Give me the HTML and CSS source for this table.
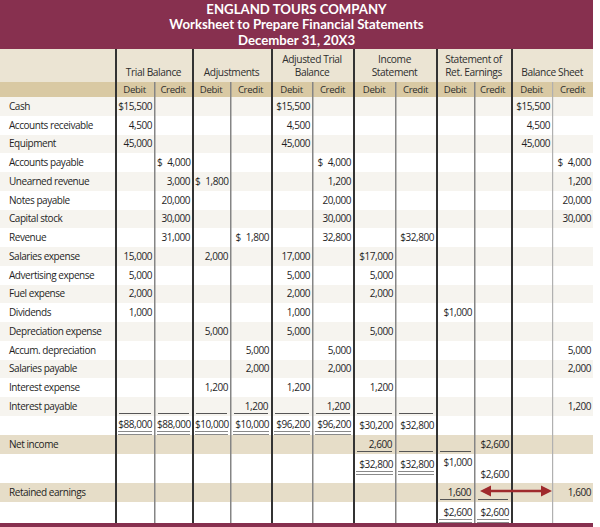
FILE: index.html
```html
<!DOCTYPE html>
<html>
<head>
<meta charset="utf-8">
<link rel="stylesheet" href="styles.css">
</head>
<body>
<div class="sheet">
  <div class="title">
    <div>ENGLAND TOURS COMPANY</div>
    <div>Worksheet to Prepare Financial Statements</div>
    <div>December 31, 20X3</div>
  </div>
  <table>
    <colgroup>
      <col class="c-label"><col class="c39"><col class="c38"><col class="c38"><col class="c41"><col class="c41"><col class="c41"><col class="c42"><col class="c41"><col class="c38"><col class="c37"><col class="c41"><col class="c41">
    </colgroup>
    <thead>
      <tr class="h1">
        <th class="lh"></th>
        <th class="g" colspan="2">Trial Balance</th>
        <th class="g" colspan="2">Adjustments</th>
        <th class="g" colspan="2">Adjusted Trial<br>Balance</th>
        <th class="g" colspan="2">Income<br>Statement</th>
        <th class="g" colspan="2">Statement of<br>Ret. Earnings</th>
        <th class="g" colspan="2">Balance Sheet</th>
      </tr>
      <tr class="h2">
        <th class="lh"></th>
        <th class="g">Debit</th><th class="i">Credit</th>
        <th class="g">Debit</th><th class="i">Credit</th>
        <th class="g">Debit</th><th class="i">Credit</th>
        <th class="g">Debit</th><th class="i">Credit</th>
        <th class="g">Debit</th><th class="i">Credit</th>
        <th class="g">Debit</th><th class="i lt">Credit</th>
      </tr>
    </thead>
    <tbody>
      <tr class="alt">
        <td class="l">Cash</td>
        <td class="g">$15,500</td><td class="i"></td><td class="g"></td><td class="i"></td><td class="g">$15,500</td><td class="i"></td><td class="g"></td><td class="i"></td><td class="g"></td><td class="i"></td><td class="g">$15,500</td><td class="i lt"></td>
      </tr>
      <tr>
        <td class="l">Accounts receivable</td>
        <td class="g">4,500</td><td class="i"></td><td class="g"></td><td class="i"></td><td class="g">4,500</td><td class="i"></td><td class="g"></td><td class="i"></td><td class="g"></td><td class="i"></td><td class="g">4,500</td><td class="i lt"></td>
      </tr>
      <tr class="alt">
        <td class="l">Equipment</td>
        <td class="g">45,000</td><td class="i"></td><td class="g"></td><td class="i"></td><td class="g">45,000</td><td class="i"></td><td class="g"></td><td class="i"></td><td class="g"></td><td class="i"></td><td class="g">45,000</td><td class="i lt"></td>
      </tr>
      <tr>
        <td class="l">Accounts payable</td>
        <td class="g"></td><td class="i"><span class="cur">$</span>4,000</td><td class="g"></td><td class="i"></td><td class="g"></td><td class="i"><span class="cur">$</span>4,000</td><td class="g"></td><td class="i"></td><td class="g"></td><td class="i"></td><td class="g"></td><td class="i lt"><span class="cur">$</span>4,000</td>
      </tr>
      <tr class="alt">
        <td class="l">Unearned revenue</td>
        <td class="g"></td><td class="i">3,000</td><td class="g"><span class="cur">$</span>1,800</td><td class="i"></td><td class="g"></td><td class="i">1,200</td><td class="g"></td><td class="i"></td><td class="g"></td><td class="i"></td><td class="g"></td><td class="i lt">1,200</td>
      </tr>
      <tr>
        <td class="l">Notes payable</td>
        <td class="g"></td><td class="i">20,000</td><td class="g"></td><td class="i"></td><td class="g"></td><td class="i">20,000</td><td class="g"></td><td class="i"></td><td class="g"></td><td class="i"></td><td class="g"></td><td class="i lt">20,000</td>
      </tr>
      <tr class="alt">
        <td class="l">Capital stock</td>
        <td class="g"></td><td class="i">30,000</td><td class="g"></td><td class="i"></td><td class="g"></td><td class="i">30,000</td><td class="g"></td><td class="i"></td><td class="g"></td><td class="i"></td><td class="g"></td><td class="i lt">30,000</td>
      </tr>
      <tr>
        <td class="l">Revenue</td>
        <td class="g"></td><td class="i">31,000</td><td class="g"></td><td class="i"><span class="cur">$</span>1,800</td><td class="g"></td><td class="i">32,800</td><td class="g"></td><td class="i">$32,800</td><td class="g"></td><td class="i"></td><td class="g"></td><td class="i lt"></td>
      </tr>
      <tr class="alt">
        <td class="l">Salaries expense</td>
        <td class="g">15,000</td><td class="i"></td><td class="g">2,000</td><td class="i"></td><td class="g">17,000</td><td class="i"></td><td class="g">$17,000</td><td class="i"></td><td class="g"></td><td class="i"></td><td class="g"></td><td class="i lt"></td>
      </tr>
      <tr>
        <td class="l">Advertising expense</td>
        <td class="g">5,000</td><td class="i"></td><td class="g"></td><td class="i"></td><td class="g">5,000</td><td class="i"></td><td class="g">5,000</td><td class="i"></td><td class="g"></td><td class="i"></td><td class="g"></td><td class="i lt"></td>
      </tr>
      <tr class="alt">
        <td class="l">Fuel expense</td>
        <td class="g">2,000</td><td class="i"></td><td class="g"></td><td class="i"></td><td class="g">2,000</td><td class="i"></td><td class="g">2,000</td><td class="i"></td><td class="g"></td><td class="i"></td><td class="g"></td><td class="i lt"></td>
      </tr>
      <tr>
        <td class="l">Dividends</td>
        <td class="g">1,000</td><td class="i"></td><td class="g"></td><td class="i"></td><td class="g">1,000</td><td class="i"></td><td class="g"></td><td class="i"></td><td class="g">$1,000</td><td class="i"></td><td class="g"></td><td class="i lt"></td>
      </tr>
      <tr class="alt">
        <td class="l">Depreciation expense</td>
        <td class="g"></td><td class="i"></td><td class="g">5,000</td><td class="i"></td><td class="g">5,000</td><td class="i"></td><td class="g">5,000</td><td class="i"></td><td class="g"></td><td class="i"></td><td class="g"></td><td class="i lt"></td>
      </tr>
      <tr>
        <td class="l">Accum. depreciation</td>
        <td class="g"></td><td class="i"></td><td class="g"></td><td class="i">5,000</td><td class="g"></td><td class="i">5,000</td><td class="g"></td><td class="i"></td><td class="g"></td><td class="i"></td><td class="g"></td><td class="i lt">5,000</td>
      </tr>
      <tr class="alt">
        <td class="l">Salaries payable</td>
        <td class="g"></td><td class="i"></td><td class="g"></td><td class="i">2,000</td><td class="g"></td><td class="i">2,000</td><td class="g"></td><td class="i"></td><td class="g"></td><td class="i"></td><td class="g"></td><td class="i lt">2,000</td>
      </tr>
      <tr>
        <td class="l">Interest expense</td>
        <td class="g"></td><td class="i"></td><td class="g">1,200</td><td class="i"></td><td class="g">1,200</td><td class="i"></td><td class="g">1,200</td><td class="i"></td><td class="g"></td><td class="i"></td><td class="g"></td><td class="i lt"></td>
      </tr>
      <tr class="alt">
        <td class="l">Interest payable</td>
        <td class="g"><div class="su">&nbsp;</div></td><td class="i"><div class="su">&nbsp;</div></td><td class="g"><div class="su">&nbsp;</div></td><td class="i"><div class="su">1,200</div></td><td class="g"><div class="su">&nbsp;</div></td><td class="i"><div class="su">1,200</div></td><td class="g"><div class="su">&nbsp;</div></td><td class="i"><div class="su">&nbsp;</div></td><td class="g"></td><td class="i"></td><td class="g"></td><td class="i lt">1,200</td>
      </tr>
      <tr class="tot">
        <td class="l"></td>
        <td class="g"><div class="du">$88,000</div></td><td class="i"><div class="du">$88,000</div></td><td class="g"><div class="du">$10,000</div></td><td class="i"><div class="du">$10,000</div></td><td class="g"><div class="du">$96,200</div></td><td class="i"><div class="du">$96,200</div></td><td class="g"><div class="nu">$30,200</div></td><td class="i"><div class="nu">$32,800</div></td><td class="g"></td><td class="i"></td><td class="g"></td><td class="i lt"></td>
      </tr>
      <tr class="hi">
        <td class="l">Net income</td>
        <td class="g"></td><td class="i"></td><td class="g"></td><td class="i"></td><td class="g"></td><td class="i"></td><td class="g"><div class="su">2,600</div></td><td class="i"><div class="su">&nbsp;</div></td><td class="g"><div class="su">&nbsp;</div></td><td class="i">$2,600</td><td class="g"></td><td class="i lt"></td>
      </tr>
      <tr class="tall">
        <td class="l"></td>
        <td class="g"></td><td class="i"></td><td class="g"></td><td class="i"></td><td class="g"></td><td class="i"></td><td class="g"><div class="du">$32,800</div></td><td class="i"><div class="du">$32,800</div></td><td class="g"><div class="nu">$1,000</div></td><td class="i"><div class="low">$2,600</div></td><td class="g"></td><td class="i lt"></td>
      </tr>
      <tr class="hi">
        <td class="l">Retained earnings</td>
        <td class="g"></td><td class="i"></td><td class="g"></td><td class="i"></td><td class="g"></td><td class="i"></td><td class="g"></td><td class="i"></td><td class="g"><div class="su">1,600</div></td><td class="i"><div class="su">&nbsp;</div></td><td class="g"></td><td class="i lt">1,600</td>
      </tr>
      <tr class="last">
        <td class="l"></td>
        <td class="g"></td><td class="i"></td><td class="g"></td><td class="i"></td><td class="g"></td><td class="i"></td><td class="g"></td><td class="i"></td><td class="g"><div class="du">$2,600</div></td><td class="i"><div class="du">$2,600</div></td><td class="g"></td><td class="i lt"></td>
      </tr>
    </tbody>
  </table>
  <div class="bottom"></div>
  <svg class="arrow" width="72" height="12" viewBox="0 0 72 12" aria-hidden="true">
    <line x1="9" y1="6" x2="63" y2="6" stroke="#9f2a2c" stroke-width="2.4"/>
    <polygon points="0,6 11,0.5 11,11.5" fill="#9f2a2c"/>
    <polygon points="72,6 61,0.5 61,11.5" fill="#9f2a2c"/>
  </svg>
</div>
</body>
</html>
```

FILE: styles.css
```css
html, body {
  margin: 0;
  padding: 0;
  background: #ffffff;
}

body {
  font-family: "Open Sans", Lato, "DejaVu Sans", sans-serif;
  color: #1f1f1f;
}

.sheet {
  position: relative;
  width: 593px;
}

.title {
  box-sizing: border-box;
  height: 49px;
  padding-top: 2px;
  background: #87304f;
  color: #ffffff;
  font-family: Lato, "Open Sans", sans-serif;
  font-weight: 700;
  font-size: 13.2px;
  line-height: 15.3px;
  text-align: center;
}

table {
  width: 593px;
  table-layout: fixed;
  border-collapse: collapse;
  border-spacing: 0;
  font-size: 10px;
  letter-spacing: -0.45px;
}

.c-label { width: 115px; }
.c37 { width: 37px; }
.c38 { width: 38px; }
.c39 { width: 39px; }
.c41 { width: 41px; }
.c42 { width: 42px; }

th, td {
  padding: 0;
  overflow: visible;
  white-space: nowrap;
}

.g { box-shadow: inset 2px 0 0 #333333; }
.i { box-shadow: inset 1.5px 0 0 #858585; }
.i.lt { box-shadow: inset 1.2px 0 0 #b0b0b0; }
.lh { box-shadow: none; }

.h1 {
  height: 33px;
  background: #ebe4d3;
}

.h1 th {
  vertical-align: bottom;
  padding-bottom: 3px;
  font-weight: 400;
  font-size: 10.2px;
  letter-spacing: -0.4px;
  line-height: 13px;
  color: #2e2e2e;
}

.h2 {
  height: 15px;
  background: #d9c9a3;
}

.h2 th {
  font-weight: 400;
  font-size: 9.6px;
  letter-spacing: -0.3px;
  line-height: 15px;
  color: #2e2e2e;
  text-align: center;
}

tbody tr {
  height: 18.75px;
  background: #ffffff;
}

tbody tr.alt {
  background: #f6f4ef;
}

tbody tr.hi {
  background: #e6ddc8;
}

tbody tr.tall {
  height: 29.5px;
}

tbody tr.last {
  height: 18.5px;
}

td {
  text-align: right;
  padding: 0 2px 0 3px;
  line-height: 13px;
}

td.l {
  text-align: left;
  padding-left: 9px;
}

.cur {
  margin-right: 5px;
}

.su {
  border-bottom: 1.5px solid #555555;
  margin: 2px 1px 0 1px;
}

.du {
  border-bottom: 4px double #8a8a8a;
  margin: 2px 0 0 0;
}

.nu {
  margin-top: 0;
}

tr.tall td {
  vertical-align: top;
  padding-top: 2px;
}

tr.tall .low {
  padding-top: 12px;
}

tr.last td {
  vertical-align: top;
  padding-top: 2px;
}

.bottom {
  height: 5px;
  background: #87304f;
}

.arrow {
  position: absolute;
  left: 480px;
  top: 485px;
}
```
